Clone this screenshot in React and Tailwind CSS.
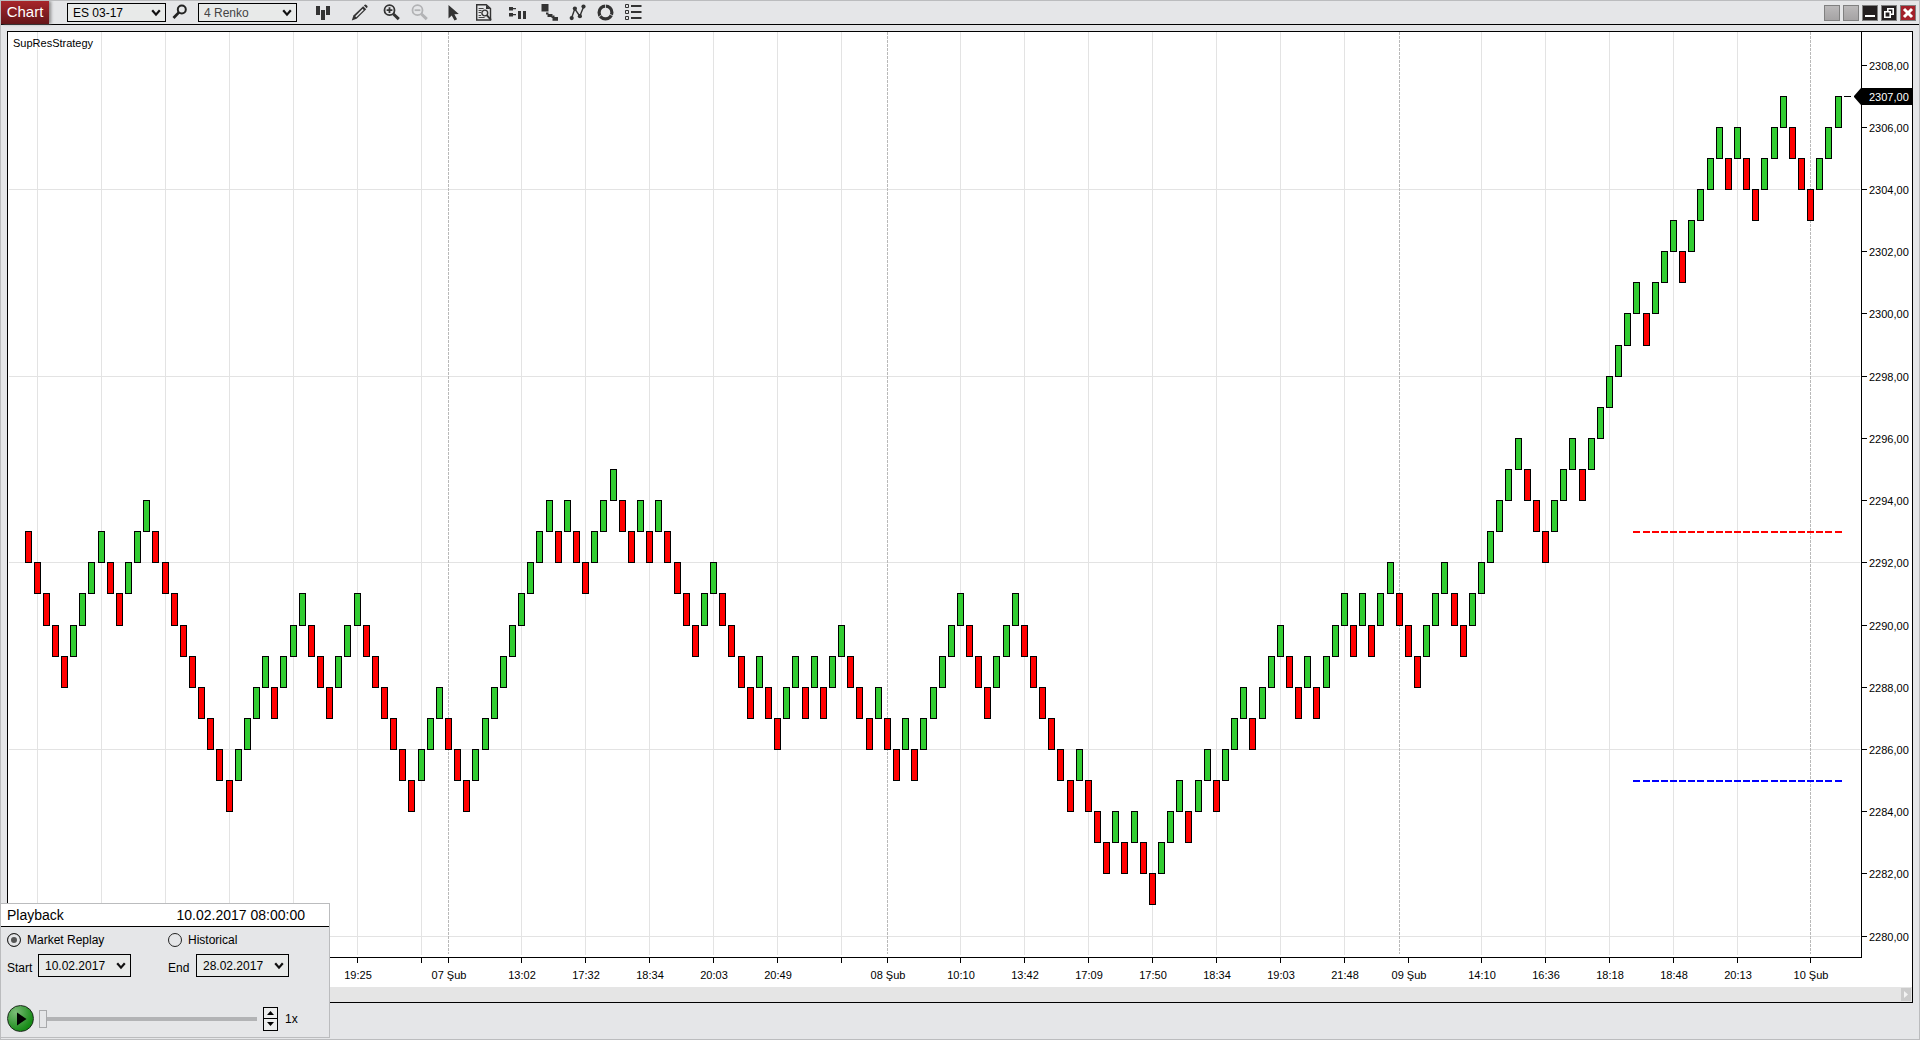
import React, { useLayoutEffect, useRef, useState } from "react";

/* ---------- chart data ---------- */

const FIRST_TOP = 2293;

// Lengths of consecutive falling (negative) and rising (positive) brick runs.
const RUNS = [
  -5, 4, -2, 3, -9, 4, -1, 3, -3, 3, -6, 3, -3, 9, -1, 1, -2, 3, -2, 1, -1, 1,
  -4, 2, -4, 1, -2, 2, -1, 1, -1, 2, -3, 1, -2, 1, -1, 5, -3, 3, -6, 1, -3, 1,
  -1, 1, -2, 3, -1, 2, -1, 3, -1, 3, -2, 1, -1, 3, -1, 1, -1, 2, -3, 3, -2, 6,
  -3, 3, -1, 6, -1, 3, -1, 4, -1, 1, -2, 3, -3, 3,
];

const BRICKS = [];
let top = FIRST_TOP + 1;
for (const run of RUNS) {
  for (let n = 0; n < Math.abs(run); n++) {
    top += Math.sign(run);
    BRICKS.push({ top, up: run > 0 });
  }
}

const GRID_BARS = [
  1, 8, 15, 22, 29, 36, 43, 54, 61, 68, 75, 82, 89, 102, 109, 116, 123, 130,
  137, 144, 159, 166, 173, 180, 187,
];
const SESSION_BARS = [46, 94, 150, 195];
const TIMES = [
  [1, ""], [8, ""], [15, ""], [22, ""], [29, ""], [36, "19:25"], [43, ""],
  [46, "07 Şub"], [54, "13:02"], [61, "17:32"], [68, "18:34"], [75, "20:03"],
  [82, "20:49"], [89, ""], [94, "08 Şub"], [102, "10:10"], [109, "13:42"],
  [116, "17:09"], [123, "17:50"], [130, "18:34"], [137, "19:03"],
  [144, "21:48"], [151, "09 Şub"], [159, "14:10"], [166, "16:36"],
  [173, "18:18"], [180, "18:48"], [187, "20:13"], [195, "10 Şub"],
];
const PRICES = Array.from({ length: 15 }, (_, i) => 2308 - i * 2);
const GRID_PRICES = [2304, 2298, 2292, 2286, 2280];
const LEVELS = [
  { price: 2293, color: "#ff0000" },
  { price: 2285, color: "#0000ff" },
];

function RenkoChart() {
  const box = useRef(null);
  const [size, setSize] = useState({ w: 1904, h: 955 });

  useLayoutEffect(() => {
    const measure = () => {
      const r = box.current;
      setSize({ w: Math.max(r.clientWidth, 300), h: Math.max(r.clientHeight, 200) });
    };
    measure();
    const ro = new ResizeObserver(measure);
    ro.observe(box.current);
    return () => ro.disconnect();
  }, []);

  const plotW = size.w - 51;
  const plotH = size.h - 30;
  const last = BRICKS.length - 1;
  const x = (i) => 20 + Math.floor((i * (plotW - 43)) / last + 0.001);
  const y = (p) => 33 + Math.floor(((2308 - p) * (plotH - 54)) / 28 + 0.1);
  const lastY = y(2307);

  return (
    <div ref={box} className="min-h-0 flex-1 overflow-hidden">
      <svg
        width={size.w}
        height={size.h}
        className="block text-[11px]"
        shapeRendering="crispEdges"
        role="img"
        aria-label="ES 03-17 4 Renko chart"
      >
        {GRID_BARS.map((i) => (
          <rect key={i} x={x(i)} y={0} width={1} height={plotH - 2} fill="#e3e3e3" />
        ))}
        {GRID_PRICES.map((p) => (
          <rect key={p} x={1} y={y(p)} width={plotW - 2} height={1} fill="#e3e3e3" />
        ))}
        {SESSION_BARS.map((i) => (
          <line key={i} x1={x(i) + 0.5} x2={x(i) + 0.5} y1={0} y2={plotH - 3}
            stroke="#b9b9b9" strokeDasharray="3 1" />
        ))}
        {BRICKS.map((b, i) => {
          const t = y(b.top);
          const bottom = y(b.top - 1);
          return (
            <g key={i}>
              <rect x={x(i) - 3} y={t} width={7} height={bottom - t + 1} fill="#000" />
              <rect x={x(i) - 2} y={t + 1} width={5} height={bottom - t - 1}
                fill={b.up ? "#32cd32" : "#ff0000"} />
            </g>
          );
        })}
        {LEVELS.map((l) =>
          BRICKS.slice(176).map((_, n) => (
            <rect key={l.price + "-" + n} x={x(176 + n) - 3} y={y(l.price)} width={7}
              height={2} fill={l.color} />
          ))
        )}

        <rect x={0} y={plotH} width={plotW + 1} height={1} fill="#000" />
        <rect x={plotW} y={0} width={1} height={plotH} fill="#000" />

        {TIMES.map(([i, label]) => (
          <g key={i}>
            <rect x={x(i)} y={plotH + 1} width={1} height={5} fill="#000" />
            <text x={x(i) + 1} y={plotH + 22} textAnchor="middle">{label}</text>
          </g>
        ))}
        {PRICES.map((p) => (
          <g key={p}>
            <rect x={plotW + 1} y={y(p)} width={5} height={1} fill="#000" />
            <text x={plotW + 8} y={y(p) + 5}>{p},00</text>
          </g>
        ))}

        <rect x={plotW - 17} y={lastY} width={7} height={1} fill="#000" />
        <path
          d={`M${plotW - 7} ${lastY} l7 -8 h${size.w - plotW} v17 h-${size.w - plotW} l-7 -8z`}
          fill="#000"
          shapeRendering="auto"
        />
        <text x={plotW + 8} y={lastY + 5} fill="#fff">2307,00</text>
        <text x={5} y={15}>SupResStrategy</text>
      </svg>
    </div>
  );
}

/* ---------- controls ---------- */

function Dropdown({ id, label, value, className, selectClass }) {
  return (
    <div className={"relative " + className}>
      <select
        id={id}
        aria-label={label}
        defaultValue={value}
        className={"block h-full w-full appearance-none border border-black bg-[#e8eae9] text-xs outline-none " + selectClass}
      >
        <option>{value}</option>
      </select>
      <svg viewBox="0 0 10 8" className="pointer-events-none absolute top-0 right-[5px] bottom-0 my-auto h-2 w-2.5">
        <path d="M1.2 1.2 5 5.6 8.8 1.2" fill="none" stroke="#111" strokeWidth="2.2" />
      </svg>
    </div>
  );
}

function Tool({ label, className = "", children }) {
  return (
    <button type="button" aria-label={label} className={"flex h-5 w-7 shrink-0 items-center justify-center " + className}>
      <svg viewBox="0 0 17 17" className="h-[17px] w-[17px]" fill="#333" stroke="none">
        {children}
      </svg>
    </button>
  );
}

function Toolbar() {
  return (
    <header className="flex h-6 shrink-0 items-center border-b border-black">
      <h1 className="flex h-[23px] w-12 shrink-0 items-center justify-center bg-linear-to-b from-[#a8252a] to-[#651519] text-[15px] text-white shadow-[2px_0_3px_#8a8a8a]">
        Chart
      </h1>
      <Dropdown label="Instrument" value="ES 03-17" className="ml-[18px] h-[19px] w-[99px] shrink-0" selectClass="pl-[5px] text-black" />
      <Tool label="Search instrument">
        <circle cx="9.8" cy="5.5" r="4" fill="none" stroke="#222" strokeWidth="2" />
        <path d="M6.9 8.4 1.5 14" stroke="#222" strokeWidth="2.8" />
      </Tool>
      <Dropdown label="Interval" value="4 Renko" className="ml-1 h-[19px] w-[99px] shrink-0" selectClass="pl-[5px] text-[#444]" />

      <Tool label="Chart style" className="ml-3">
        <path d="M1 2h4v9H1zM6 6h4v10H6zM11 2h4v9h-4z" />
      </Tool>
      <Tool label="Draw" className="ml-2">
        <path d="M.8 16.6 2.4 11.6 12.2 2.2 15.2 5.2 5.6 14.8z" />
        <path d="M12.9 1.5 13.8.7Q14.6.2 15.4.9L16.2 1.7Q17 2.5 16.4 3.3L15.7 4.3z" />
        <path d="M4.8 12.8 12.2 5.4" stroke="#e5e6e8" strokeWidth="1.5" />
      </Tool>
      <Tool label="Zoom in" className="ml-1">
        <circle cx="6.5" cy="6.2" r="5" fill="none" stroke="#333" strokeWidth="1.8" />
        <path d="M3.6 6.2h5.8M6.5 3.3v5.8" stroke="#333" strokeWidth="1.8" />
        <path d="M10.4 10 15.8 15.2" stroke="#333" strokeWidth="3" />
      </Tool>
      <Tool label="Zoom out">
        <circle cx="6.5" cy="6.2" r="5" fill="none" stroke="#b2b3b5" strokeWidth="1.8" />
        <path d="M3.6 6.2h5.8" stroke="#b2b3b5" strokeWidth="1.8" />
        <path d="M10.4 10 15.8 15.2" stroke="#b2b3b5" strokeWidth="3" />
      </Tool>
      <Tool label="Pointer" className="ml-1.5">
        <path d="M3.5 1v13.4l3.2-3 2.8 5.2 2.6-1.3-2.7-5 4.4-.4z" />
      </Tool>
      <Tool label="Data box" className="ml-0.5">
        <path d="M1.7.8h9.6l4.2 3.8V16H1.7z" fill="none" stroke="#333" strokeWidth="1.4" />
        <path d="M11 1v4h4.4" fill="#333" />
        <path d="M3.6 4.5h5M3.6 6.5h3M3.6 8.5h2.4M3.6 11.5h2.6M3.6 13.5h6" stroke="#333" strokeWidth=".9" />
        <circle cx="9.8" cy="9" r="2.9" fill="#e5e6e8" stroke="#333" strokeWidth="1.4" />
        <path d="M11.8 11.2 16 15.8" stroke="#333" strokeWidth="1.9" />
      </Tool>
      <Tool label="Order entry" className="ml-1.5">
        <path d="M0 3h4v1h3v1.3H4v1.2H0zM0 9h4v1h3v1.3H4v1.2H0zM9 7h3v8H9zM14 7h3v8h-3z" />
      </Tool>
      <Tool label="Data series" className="ml-1">
        <path d="M.5 0h7v7.5h-7zM5 8.5h2.5V10h4v3H6.5v-2.5H5z" />
        <path d="M10.5 12.5h1v-1h2v1.5h3.5v3.8h-5.5V14h-1z" />
      </Tool>
      <Tool label="Indicators">
        <path d="M2.5 14.2 5.8 4.8 10.8 12.2 14.5 3" fill="none" stroke="#333" strokeWidth="1.4" />
        <circle cx="2.7" cy="14.1" r="2.1" />
        <circle cx="5.9" cy="4.6" r="2.1" />
        <circle cx="10.9" cy="12.2" r="2.1" />
        <circle cx="14.5" cy="2.6" r="2.1" />
      </Tool>
      <Tool label="Strategies">
        <circle cx="8.5" cy="8.5" r="6.4" fill="none" stroke="#333" strokeWidth="3.2" />
        <path d="M8.5 0v4.6M1.5 13 4.8 10.8M16.4 12 12.6 10.2" stroke="#e5e6e8" strokeWidth=".8" />
      </Tool>
      <Tool label="Properties">
        <path d="M.5.5h3v3h-3zM.5 6.5h3v3h-3zM.5 12.5h3v3h-3z" fill="none" stroke="#333" />
        <path d="M6 2h10.5M6 8h10.5M6 14h10.5" stroke="#333" strokeWidth="2" />
      </Tool>

      <div className="mt-px mr-[3px] ml-auto flex gap-[3px]">
        <button type="button" aria-label="Link instrument" className="h-4 w-4 border border-[#808080] bg-linear-to-b from-[#bbb9ba] to-[#a5a3a4]" />
        <button type="button" aria-label="Link interval" className="h-4 w-4 border border-[#808080] bg-linear-to-b from-[#bbb9ba] to-[#a5a3a4]" />
        <button type="button" aria-label="Minimize" className="h-4 w-4 border border-[#808080] bg-[#231f20]">
          <svg viewBox="0 0 14 14" className="block"><path d="M2 9h10v2H2z" fill="#fff" /></svg>
        </button>
        <button type="button" aria-label="Restore" className="h-4 w-4 border border-[#808080] bg-[#231f20]">
          <svg viewBox="0 0 14 14" className="block" fill="none" stroke="#fff" strokeWidth="1.6">
            <path d="M5.8 2.8h5.4v5.4H5.8z" />
            <path d="M2.8 5.8h5.4v5.4H2.8z" fill="#231f20" />
          </svg>
        </button>
        <button type="button" aria-label="Close" className="h-4 w-4 border border-[#808080] bg-[#a3202a]">
          <svg viewBox="0 0 14 14" className="block"><path d="M3 3 11 11M11 3 3 11" stroke="#fff" strokeWidth="3" /></svg>
        </button>
      </div>
    </header>
  );
}

const RADIO =
  "h-[14px] w-[14px] shrink-0 appearance-none rounded-full border border-[#222] checked:bg-[#555] checked:shadow-[inset_0_0_0_3px_#e5e6e8]";

function Playback() {
  return (
    <section aria-label="Playback" className="absolute bottom-px left-0 w-[329px] border-y border-r border-[#bbbcbe] bg-[#e5e6e8]">
      <div className="flex h-[23px] items-center border-b border-black bg-white pr-6 pl-1.5 text-sm">
        <h2>Playback</h2>
        <time className="ml-auto">10.02.2017 08:00:00</time>
      </div>
      <div className="px-1.5 pt-[3px] pb-[5px] text-xs">
        <div className="grid grid-cols-2">
          <label className="flex h-5 items-center gap-1.5">
            <input type="radio" name="source" defaultChecked className={RADIO} />
            Market Replay
          </label>
          <label className="flex h-5 items-center gap-1.5 pl-[3px]">
            <input type="radio" name="source" className={RADIO} />
            Historical
          </label>
        </div>
        <div className="mt-1 grid grid-cols-2">
          <div className="flex items-center">
            <label htmlFor="start" className="w-[31px] pt-1">Start</label>
            <Dropdown id="start" value="10.02.2017" className="h-[23px] w-[93px]" selectClass="pl-1.5" />
          </div>
          <div className="flex items-center pl-[3px]">
            <label htmlFor="end" className="w-7 pt-1">End</label>
            <Dropdown id="end" value="28.02.2017" className="h-[23px] w-[93px]" selectClass="pl-1.5" />
          </div>
        </div>
        <div className="mt-7 flex items-center">
          <button type="button" aria-label="Play" className="h-[27px] w-[27px] shrink-0 rounded-full border border-[#1c2a1c] bg-radial-[at_30%_25%] from-[#7cba78] to-[#148a14] to-75%">
            <svg viewBox="0 0 25 25" className="block"><path d="M9 6.5v13l9.5-6.5z" fill="#000" /></svg>
          </button>
          <input
            type="range"
            aria-label="Playback position"
            defaultValue={0}
            className="ml-[5px] h-[18px] w-[218px] appearance-none bg-transparent [&::-webkit-slider-runnable-track]:h-1 [&::-webkit-slider-runnable-track]:bg-[#b2b3b5] [&::-webkit-slider-thumb]:-mt-[7px] [&::-webkit-slider-thumb]:h-[18px] [&::-webkit-slider-thumb]:w-2 [&::-webkit-slider-thumb]:appearance-none [&::-webkit-slider-thumb]:border [&::-webkit-slider-thumb]:border-[#a8a9ab] [&::-webkit-slider-thumb]:bg-[#e5e6e8]"
          />
          <div className="ml-1.5 flex w-[15px] shrink-0 flex-col border border-black bg-[#eceded]">
            <button type="button" aria-label="Faster" className="flex h-[11px] items-center justify-center border-b border-black">
              <svg viewBox="0 0 7 4" className="h-1 w-[7px]"><path d="M0 4 3.5 0 7 4z" /></svg>
            </button>
            <button type="button" aria-label="Slower" className="flex h-[11px] items-center justify-center">
              <svg viewBox="0 0 7 4" className="h-1 w-[7px]"><path d="M0 0 3.5 4 7 0z" /></svg>
            </button>
          </div>
          <output className="ml-[7px]">1x</output>
        </div>
      </div>
    </section>
  );
}

export default function App() {
  return (
    <div className="relative flex h-screen w-full flex-col overflow-hidden border border-[#bbbcbe] bg-[#e5e6e8] font-['Liberation_Sans',Arial,sans-serif] text-black">
      <Toolbar />
      <main className="mx-1.5 mt-1.5 mb-9 flex min-h-0 flex-1 flex-col border border-black bg-white">
        <RenkoChart />
        <div className="flex h-[15px] shrink-0 justify-end bg-[#e5e5e5] py-px">
          <button type="button" aria-label="Scroll right" className="mr-px flex w-2.5 items-center justify-center bg-[#cbcbcb]">
            <svg viewBox="0 0 4 7" className="h-[7px] w-1"><path d="M0 0 4 3.5 0 7z" fill="#f3f3f3" /></svg>
          </button>
        </div>
      </main>
      <Playback />
    </div>
  );
}
